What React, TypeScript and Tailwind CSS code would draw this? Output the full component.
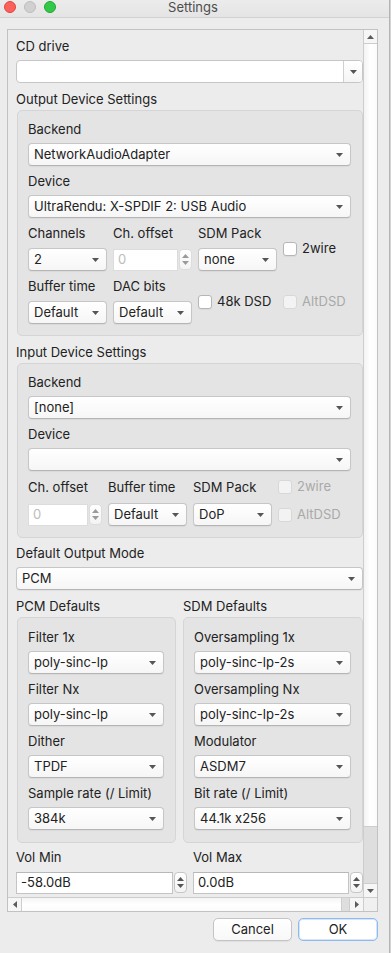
import React from "react";

function DownArrow({ color = "#555555" }: { color?: string }) {
  return (
    <svg width="7" height="4" viewBox="0 0 7 4" className="shrink-0">
      <path d="M0 0H7L3.5 4Z" fill={color} />
    </svg>
  );
}
function UpArrow({ color = "#555555" }: { color?: string }) {
  return (
    <svg width="7" height="4" viewBox="0 0 7 4" className="shrink-0">
      <path d="M0 4H7L3.5 0Z" fill={color} />
    </svg>
  );
}
function LeftArrow() {
  return (
    <svg width="4" height="7" viewBox="0 0 4 7">
      <path d="M4 0V7L0 3.5Z" fill="#5c5c5c" />
    </svg>
  );
}
function RightArrow() {
  return (
    <svg width="4" height="7" viewBox="0 0 4 7">
      <path d="M0 0V7L4 3.5Z" fill="#5c5c5c" />
    </svg>
  );
}

function Label({ children, className = "" }: { children?: React.ReactNode; className?: string }) {
  return <div className={"h-[20px] leading-[20px] whitespace-nowrap " + className}>{children}</div>;
}

function Combo({ text, className = "" }: { text: string; className?: string }) {
  return (
    <div
      className={
        "h-[23px] flex items-center rounded-[4px] border border-[#c6c6c6] border-b-[#b5b5b5] bg-linear-to-b from-white to-[#f6f6f6] shadow-[0_1px_1px_rgba(0,0,0,0.05)] pl-[5px] pr-[7px] " +
        className
      }
    >
      <span className="flex-1 whitespace-nowrap overflow-hidden">{text}</span>
      <DownArrow />
    </div>
  );
}

function EditCombo({ className = "" }: { className?: string }) {
  return (
    <div className={"h-[23px] flex rounded-[4px] border border-[#c6c6c6] bg-white overflow-hidden " + className}>
      <div className="flex-1" />
      <div className="w-[19px] border-l border-[#d0d0d0] bg-linear-to-b from-white to-[#f5f5f5] flex items-center justify-center">
        <DownArrow />
      </div>
    </div>
  );
}

function Spin({ text, disabled = false, className = "" }: { text: string; disabled?: boolean; className?: string }) {
  return (
    <div className={"h-[23px] flex items-center " + className}>
      <div
        className={
          "flex-1 h-[22px] bg-white border flex items-center pl-[4px] " +
          (disabled ? "border-[#dcdcdc] text-[#bcbcbc]" : "border-[#c4c4c4] border-t-[#b8b8b8]")
        }
      >
        {text}
      </div>
      <div
        className={
          "ml-[1px] w-[13px] h-[21px] rounded-[4px] border bg-linear-to-b from-white to-[#f3f3f3] flex flex-col items-center justify-center gap-[3px] " +
          (disabled ? "border-[#dddddd]" : "border-[#c6c6c6]")
        }
      >
        <UpArrow color={disabled ? "#9a9a9a" : "#555555"} />
        <DownArrow color={disabled ? "#9a9a9a" : "#555555"} />
      </div>
    </div>
  );
}

function Check({ label, disabled = false, className = "" }: { label: string; disabled?: boolean; className?: string }) {
  return (
    <div className={"flex items-center h-[14px] whitespace-nowrap " + className}>
      <div
        className={
          "w-[14px] h-[14px] rounded-[3px] border shrink-0 " +
          (disabled ? "border-[#d8d8d8] bg-[#f3f3f3]" : "border-[#b6b6b6] bg-white shadow-[0_1px_1px_rgba(0,0,0,0.05)]")
        }
      />
      <span className={"ml-[5px] " + (disabled ? "text-[#a9a9a9]" : "")}>{label}</span>
    </div>
  );
}

function Group({ children, className = "" }: { children?: React.ReactNode; className?: string }) {
  return (
    <div className={"rounded-[5px] border border-[#d5d5d5] bg-[#e4e4e4] pl-[10px] flex flex-col " + className}>
      {children}
    </div>
  );
}

function VScroll() {
  return (
    <div className="flex flex-col h-[867px] border-l border-[#cdcdcd]">
      <div className="h-[14px] border-b border-[#cdcdcd] bg-[#f6f6f6] flex items-center justify-center">
        <UpArrow color="#5c5c5c" />
      </div>
      <div className="h-[783px] border-b border-[#cdcdcd] bg-linear-to-r from-[#f3f3f3] via-white to-[#fbfbfb]" />
      <div className="flex-1 bg-[#dedede]" />
      <div className="h-[14px] border-t border-[#cdcdcd] bg-[#f6f6f6] flex items-center justify-center">
        <DownArrow color="#5c5c5c" />
      </div>
    </div>
  );
}

function HScroll() {
  return (
    <div className="flex h-[14px] border-t border-[#cdcdcd]">
      <div className="w-[14px] border-r border-[#cdcdcd] bg-[#f6f6f6] flex items-center justify-center">
        <LeftArrow />
      </div>
      <div className="w-[320px] border-r border-[#cdcdcd] bg-linear-to-b from-[#f5f5f5] via-white to-[#fbfbfb]" />
      <div className="flex-1 bg-[#dedede]" />
      <div className="w-[14px] border-l border-[#cdcdcd] bg-[#f6f6f6] flex items-center justify-center">
        <RightArrow />
      </div>
    </div>
  );
}

export default function App() {
  return (
    <div className="w-[391px] h-[953px] bg-[#d4d4d4] overflow-hidden text-[13px] text-[#222222] font-[family-name:Inter,sans-serif] antialiased">
      <div className="w-[390px] h-[953px] bg-[#ececec] border-r border-[#b3b3b3] flex flex-col">
        {/* Title bar */}
        <div className="h-[18px] border-b border-[#d1d1d1] bg-linear-to-b from-[#ececec] to-[#e4e4e4] grid grid-cols-[1fr_auto_1fr] items-center pl-[4px] pr-[7px]">
          <div className="flex gap-[8px] -mt-[3px]">
            <div className="w-[12px] h-[12px] rounded-full bg-[#fc605c] border border-[#e0463f]" />
            <div className="w-[12px] h-[12px] rounded-full bg-[#d0d0d0] border border-[#bdbdbd]" />
            <div className="w-[12px] h-[12px] rounded-full bg-[#34c84a] border border-[#20a932]" />
          </div>
          <span className="text-[#4d4d4d] leading-[14px] -mt-[3px]">Settings</span>
          <div />
        </div>

        {/* Scroll area */}
        <div className="ml-[7px] mt-[11px] w-[371px] h-[883px] border border-[#c2c2c2] grid grid-cols-[355px_14px] grid-rows-[867px_14px]">
          <div className="overflow-hidden pl-[8px]">
            <div className="w-[347px] flex flex-col">
              <Label className="mt-[6px]">CD drive</Label>
              <EditCombo className="mt-[4px]" />
              <Label className="mt-[6px]">Output Device Settings</Label>
              <Group className="mt-[1px] ml-[1px] w-[346px] pt-[8px] pb-[11px]">
                <Label>Backend</Label>
                <Combo className="mt-[4px] w-[323px]" text="NetworkAudioAdapter" />
                <Label className="mt-[5px]">Device</Label>
                <Combo className="mt-[4px] w-[323px]" text="UltraRendu: X-SPDIF 2: USB Audio" />
                <div className="mt-[5px] flex gap-[6px]">
                  <div className="w-[79px] flex flex-col">
                    <Label>Channels</Label>
                    <Combo className="mt-[5px]" text="2" />
                  </div>
                  <div className="w-[79px] flex flex-col">
                    <Label>Ch. offset</Label>
                    <Spin className="mt-[5px]" text="0" disabled />
                  </div>
                  <div className="w-[79px] flex flex-col">
                    <Label>SDM Pack</Label>
                    <Combo className="mt-[5px]" text="none" />
                  </div>
                  <Check className="mt-[19px]" label="2wire" />
                </div>
                <div className="mt-[5px] flex gap-[6px]">
                  <div className="w-[79px] flex flex-col">
                    <Label>Buffer time</Label>
                    <Combo className="mt-[5px]" text="Default" />
                  </div>
                  <div className="w-[79px] flex flex-col">
                    <Label>DAC bits</Label>
                    <Combo className="mt-[5px]" text="Default" />
                  </div>
                  <div className="w-[79px]">
                    <Check className="mt-[19px]" label="48k DSD" />
                  </div>
                  <Check className="mt-[19px]" label="AltDSD" disabled />
                </div>
              </Group>

              <Label className="mt-[6px]">Input Device Settings</Label>
              <Group className="mt-[1px] ml-[1px] w-[346px] pt-[8px] pb-[11px]">
                <Label>Backend</Label>
                <Combo className="mt-[4px] w-[323px]" text="[none]" />
                <Label className="mt-[5px]">Device</Label>
                <Combo className="mt-[4px] w-[323px]" text="" />
                <div className="mt-[6px] flex gap-[6px]">
                  <div className="w-[74px] flex flex-col">
                    <Label>Ch. offset</Label>
                    <Spin className="mt-[6px]" text="0" disabled />
                  </div>
                  <div className="w-[79px] flex flex-col">
                    <Label>Buffer time</Label>
                    <Combo className="mt-[6px]" text="Default" />
                  </div>
                  <div className="w-[79px] flex flex-col">
                    <Label>SDM Pack</Label>
                    <Combo className="mt-[6px]" text="DoP" />
                  </div>
                  <div className="flex flex-col">
                    <Check className="mt-[3px]" label="2wire" disabled />
                    <Check className="mt-[14px]" label="AltDSD" disabled />
                  </div>
                </div>
              </Group>

              <Label className="mt-[5px]">Default Output Mode</Label>
              <Combo className="mt-[4px] w-[347px]" text="PCM" />

              <div className="mt-[6px] flex">
                <Label className="w-[167px]">PCM Defaults</Label>
                <Label>SDM Defaults</Label>
              </div>
              <div className="mt-[1px] ml-[1px] flex gap-[7px]">
                <Group className="w-[159px] pt-[9px] pb-[12px]">
                  <Label>Filter 1x</Label>
                  <Combo className="mt-[4px] w-[136px]" text="poly-sinc-lp" />
                  <Label className="mt-[5px]">Filter Nx</Label>
                  <Combo className="mt-[4px] w-[136px]" text="poly-sinc-lp" />
                  <Label className="mt-[5px]">Dither</Label>
                  <Combo className="mt-[4px] w-[136px]" text="TPDF" />
                  <Label className="mt-[5px]">Sample rate (/ Limit)</Label>
                  <Combo className="mt-[4px] w-[136px]" text="384k" />
                </Group>
                <Group className="w-[180px] pt-[9px] pb-[12px]">
                  <Label>Oversampling 1x</Label>
                  <Combo className="mt-[4px] w-[157px]" text="poly-sinc-lp-2s" />
                  <Label className="mt-[5px]">Oversampling Nx</Label>
                  <Combo className="mt-[4px] w-[157px]" text="poly-sinc-lp-2s" />
                  <Label className="mt-[5px]">Modulator</Label>
                  <Combo className="mt-[4px] w-[157px]" text="ASDM7" />
                  <Label className="mt-[5px]">Bit rate (/ Limit)</Label>
                  <Combo className="mt-[4px] w-[157px]" text="44.1k x256" />
                </Group>
              </div>

              <div className="mt-[4px] flex">
                <Label className="w-[177px]">Vol Min</Label>
                <Label>Vol Max</Label>
              </div>
              <div className="mt-[4px] flex gap-[6px]">
                <Spin className="w-[171px]" text="-58.0dB" />
                <Spin className="w-[170px]" text="0.0dB" />
              </div>
            </div>
          </div>
          <VScroll />
          <HScroll />
          <div className="border-l border-t border-[#cdcdcd] bg-[#f0f0f0]" />
        </div>

        {/* Buttons */}
        <div className="ml-[7px] mt-[6px] w-[371px] flex justify-end gap-[6px]">
          <button className="w-[79px] h-[23px] rounded-[5px] border border-[#c4c4c4] bg-linear-to-b from-white to-[#f8f8f8] shadow-[0_1px_1px_rgba(0,0,0,0.06)] leading-[21px]">
            Cancel
          </button>
          <button className="w-[80px] h-[23px] rounded-[5px] border border-[#8dbaee] bg-white shadow-[inset_0_0_0_1px_#d6e6f8] leading-[21px]">
            OK
          </button>
        </div>
      </div>
    </div>
  );
}
